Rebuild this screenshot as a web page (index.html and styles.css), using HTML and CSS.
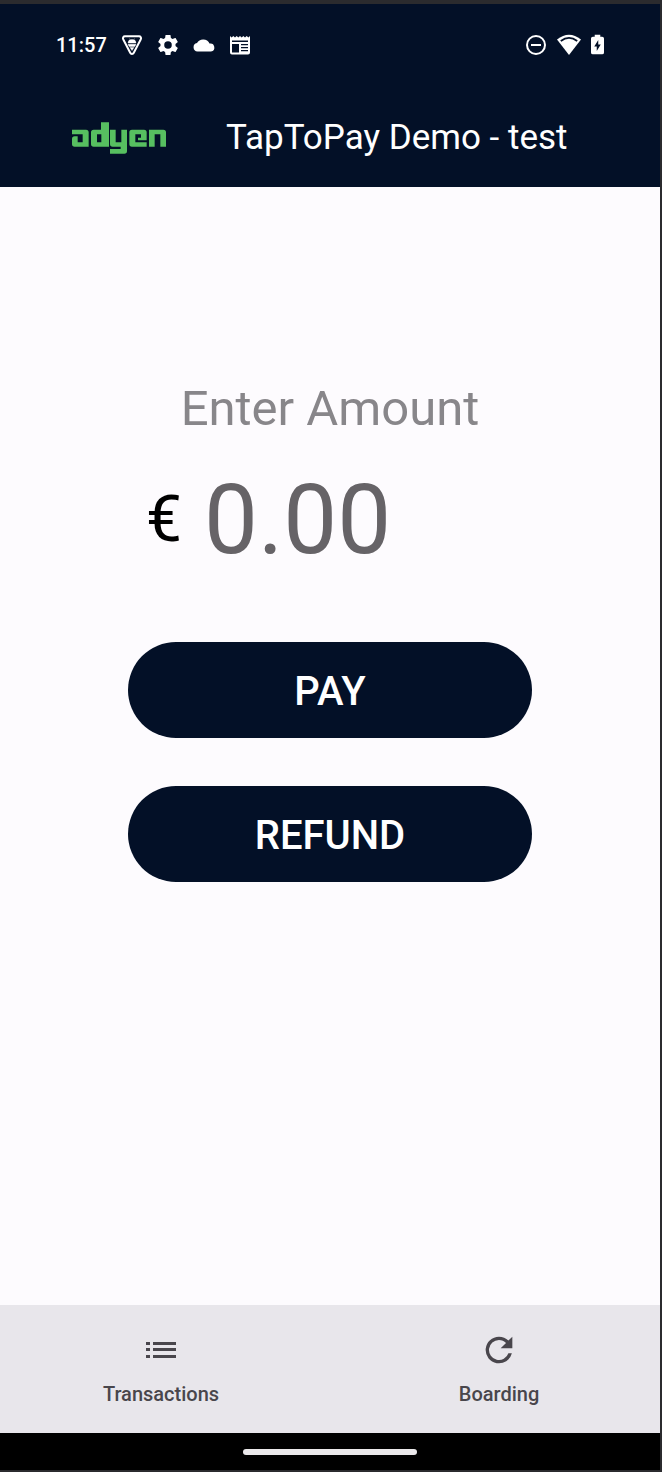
FILE: index.html
```html
<!DOCTYPE html>
<html lang="en">
<head>
<meta charset="utf-8">
<meta name="viewport" content="width=device-width, initial-scale=1">
<title>TapToPay Demo - test</title>
<link rel="stylesheet" href="styles.css">
</head>
<body>
<div class="screen">
  <div class="status-bar">
    <div class="status-left">
      <span class="clock">11:57</span>
      <svg class="status-icon" viewBox="0 0 22 22" aria-hidden="true">
        <path d="M4 2.200H18a2 2 0 0 1 1.800 3L12.800 18.800a2 2 0 0 1-3.600 0L2.200 5.200a2 2 0 0 1 1.800-3z" fill="none" stroke="#fff" stroke-width="2"/>
        <path d="M7 9a4 3.400 0 0 1 8 0zM7 10.300h8l-1.200 2.200H8.200zM9 13.500h4L11 16.500zM8.500 4.500l1 2M13.500 4.500l-1 2" fill="#fff" stroke="#fff" stroke-width=".4"/>
      </svg>
      <svg class="status-icon" viewBox="1.500 1.500 21 21" aria-hidden="true">
        <path fill="#fff" d="M19.140 12.940c.04-.3.060-.610.060-.940 0-.320-.020-.640-.070-.940l2.030-1.580c.180-.140.230-.410.120-.610l-1.920-3.320c-.120-.220-.370-.290-.590-.220l-2.390.960c-.500-.380-1.030-.700-1.620-.940l-.360-2.540c-.040-.240-.240-.410-.480-.410h-3.840c-.240 0-.430.170-.470.410l-.360 2.540c-.590.240-1.130.570-1.620.940l-2.390-.960c-.220-.080-.470 0-.590.220L2.740 8.870c-.120.210-.080.470.120.610l2.030 1.580c-.050.300-.090.630-.090.940s.020.640.070.940l-2.030 1.580c-.180.140-.230.410-.120.610l1.920 3.320c.120.220.370.290.590.220l2.390-.960c.500.380 1.030.700 1.620.940l.360 2.540c.050.240.240.410.480.410h3.840c.240 0 .440-.170.470-.410l.360-2.540c.590-.240 1.130-.560 1.620-.940l2.390.960c.220.080.470 0 .590-.220l1.920-3.320c.120-.220.070-.470-.120-.610zM12 15.600A3.600 3.600 0 1 1 12 8.400a3.600 3.600 0 0 1 0 7.200z"/>
      </svg>
      <svg class="status-icon" viewBox="0 0 22 22" aria-hidden="true">
        <path fill="#fff" d="M4.500 17.500a4.300 4.300 0 0 1-.500-8.500A7 7 0 0 1 16.500 9.500 4 4 0 0 1 18 17.500z"/>
      </svg>
      <svg class="status-icon" viewBox="0 0 22 22" aria-hidden="true">
        <path fill="#fff" fill-rule="evenodd" d="M1 2l1.600 1.400L4.300 2 6 3.400 7.700 2l1.600 1.400L11 2l1.700 1.400L14.300 2 16 3.400 17.700 2l1.700 1.400L21 2v16.500a2 2 0 0 1-2 2H3a2 2 0 0 1-2-2zM3 6.500V8h16V6.500zM3 10v8.500h7V10zM12 10v1.300h7V10zM12 13v1.300h7V13zM12 16v1.300h7V16z"/>
      </svg>
    </div>
    <div class="status-right">
      <svg class="status-icon" viewBox="0 0 22 22" aria-hidden="true">
        <circle cx="11" cy="11" r="9" fill="none" stroke="#fff" stroke-width="2"/>
        <path d="M6 11h10" stroke="#fff" stroke-width="2"/>
      </svg>
      <svg class="wifi" viewBox="0 0 24 22" aria-hidden="true">
        <path d="M0 5.500Q12-4 24 5.500L12 21z" fill="#fff"/>
        <path d="M3.800 7Q12 .8 20.200 7" fill="none" stroke="#031027" stroke-width="1.800"/>
      </svg>
      <svg class="battery" viewBox="0 0 14 22" aria-hidden="true">
        <path d="M4 0h6v2h2a2 2 0 0 1 2 2v15a2 2 0 0 1-2 2H2a2 2 0 0 1-2-2V4a2 2 0 0 1 2-2h2z" fill="#fff"/>
        <path d="M7.800 5.500v5H10.500L6.200 17.500v-5H3.500z" fill="#031027"/>
      </svg>
    </div>
  </div>

  <header class="app-bar">
    <svg class="logo" viewBox="0 0 282 94" role="img" aria-label="adyen">
      <g fill="#57bf60" fill-rule="evenodd">
        <path d="M0 22H42q8 0 8 8V73H8q-8 0-8-8V50q0-8 8-8h9v18h15V36H0z"/>
        <path d="M65 22H87V0h24V73H65q-8 0-8-8V30q0-8 8-8zM75 36V60H88V36z"/>
        <path d="M114 22H131V60H148V22H165V86q0 8-8 8H114V80H146V73H122q-8 0-8-8z"/>
        <path d="M180 22H216q8 0 8 8V54H198V46H207V36H190V60H224V73H180q-8 0-8-8V30q0-8 8-8z"/>
        <path d="M231 22H274q8 0 8 8V73H265V36H248V73H231z"/>
      </g>
    </svg>
    <h1 class="title">TapToPay Demo - test</h1>
  </header>

  <main class="content">
    <form class="payment">
      <label class="amount-label" for="amount">Enter Amount</label>
      <div class="amount-row">
        <span class="currency">€</span>
        <input class="amount" id="amount" type="text" inputmode="decimal" placeholder="0.00">
      </div>
      <button class="action" type="button">PAY</button>
      <button class="action" type="button">REFUND</button>
    </form>
  </main>

  <nav class="bottom-nav">
    <a class="nav-item" href="#transactions">
      <svg class="nav-icon" viewBox="0 0 40 40" aria-hidden="true">
        <path fill="#49464c" d="M5 12h4v3H5zM5 18h4v3H5zM5 25h4v3H5zM12 12h23v3H12zM12 18h23v3H12zM12 25h23v3H12z"/>
      </svg>
      <span>Transactions</span>
    </a>
    <a class="nav-item" href="#boarding">
      <svg class="nav-icon" viewBox="0 0 24 24" aria-hidden="true">
        <path fill="#49464c" d="M17.650 6.350A7.960 7.960 0 0 0 12 4a8 8 0 1 0 7.730 10h-2.080A6 6 0 1 1 12 6c1.660 0 3.140.690 4.220 1.780L13 11h7V4z"/>
      </svg>
      <span>Boarding</span>
    </a>
  </nav>
  <div class="gesture-bar"><div class="gesture-pill"></div></div>
</div>
</body>
</html>
```
FILE: styles.css
```css
* {
  box-sizing: border-box;
}

body {
  margin: 0;
  font-family: Roboto, "Liberation Sans", sans-serif;
}

.screen {
  display: flex;
  flex-direction: column;
  min-height: 100vh;
  border: solid #2b2b2e;
  border-width: 4px 2px 2px 0;
  background: #fdfbfe;
}

.status-bar {
  display: flex;
  align-items: center;
  justify-content: space-between;
  padding: 30px 56px;
  background: #031027;
  color: #fff;
}

.status-left {
  display: flex;
  align-items: center;
  gap: 14px;
}

.status-right {
  display: flex;
  align-items: center;
  gap: 10px;
}

.clock {
  font-size: 20px;
  font-weight: 500;
  line-height: 22px;
}

.status-icon {
  width: 22px;
  height: 22px;
}

.wifi {
  width: 24px;
  height: 22px;
}

.battery {
  width: 13px;
  height: 22px;
}

.app-bar {
  display: flex;
  align-items: center;
  gap: 60px;
  padding: 30px 72px 27px;
  background: #031027;
  color: #fff;
}

.logo {
  width: 94px;
  height: 32px;
}

.title {
  margin: 0;
  font-size: 35px;
  font-weight: 400;
  line-height: 44px;
  white-space: nowrap;
}

.content {
  flex: 1;
  padding: 192px 128px 0;
}

.payment {
  display: flex;
  flex-direction: column;
}

.amount-label {
  color: #88868a;
  font-size: 49px;
  line-height: 60px;
  text-align: center;
}

.amount-row {
  display: flex;
  align-items: center;
  gap: 22px;
  margin: 24px 0 65px;
  padding: 0 18px;
}

.currency {
  color: #000;
  font-size: 64px;
  line-height: 114px;
}

.amount {
  flex: 1;
  min-width: 0;
  padding: 0;
  border: 0;
  outline: 0;
  background: transparent;
  color: #666367;
  font-family: inherit;
  font-size: 96px;
  line-height: 114px;
}

.amount::placeholder {
  color: #666367;
  opacity: 1;
}

.action {
  height: 96px;
  padding: 2px 0 0;
  border: 0;
  border-radius: 48px;
  background: #031027;
  color: #fff;
  font-family: inherit;
  font-size: 40px;
  font-weight: 500;
}

.action + .action {
  margin-top: 48px;
}

.bottom-nav {
  display: flex;
  gap: 16px;
  background: #e8e6eb;
}

.nav-item {
  display: flex;
  flex: 1;
  flex-direction: column;
  align-items: center;
  gap: 12px;
  padding: 25px 0 27px;
  color: #49464c;
  font-size: 20px;
  font-weight: 500;
  line-height: 24px;
  text-decoration: none;
}

.nav-icon {
  width: 40px;
  height: 40px;
}

.gesture-bar {
  display: flex;
  justify-content: center;
  padding: 16px 0 15px;
  background: #000;
}

.gesture-pill {
  width: 174px;
  height: 6px;
  border-radius: 3px;
  background: #ebe9eb;
}
```
